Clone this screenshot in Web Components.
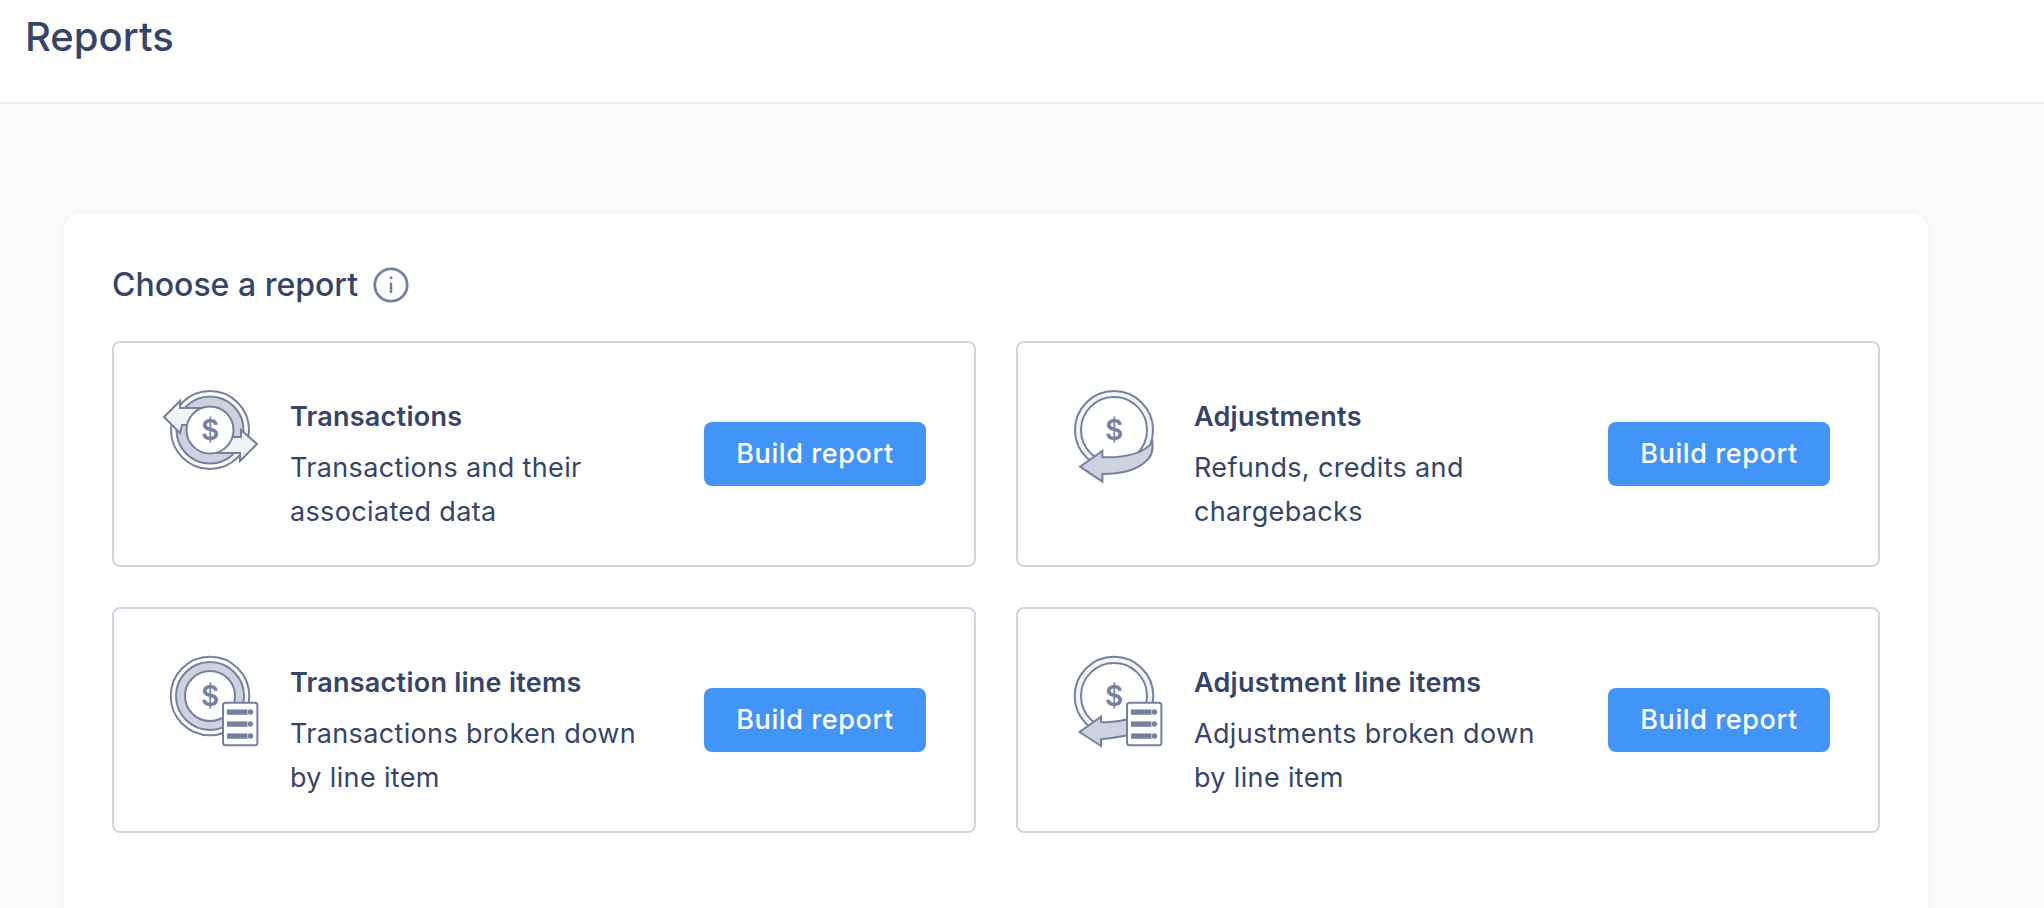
<!DOCTYPE html>
<html>
<head>
<meta charset="utf-8">
<title>Reports</title>
<style>
  html, body { margin: 0; height: 100%; overflow: hidden; }
  body { background: #fafafc; font-family: Inter, "Open Sans", sans-serif; color: #36446a; }
</style>
</head>
<body>
<app-header>Reports</app-header>
<report-panel heading="Choose a report">
  <report-card kind="transactions" name="Transactions">Transactions and their associated data</report-card>
  <report-card kind="adjustments" name="Adjustments">Refunds, credits and chargebacks</report-card>
  <report-card kind="transaction-items" name="Transaction line items">Transactions broken down by line item</report-card>
  <report-card kind="adjustment-items" name="Adjustment line items">Adjustments broken down by line item</report-card>
</report-panel>

<script>
  const dollar = `<text x="0" y="10" text-anchor="middle" font-family="Inter, sans-serif" font-size="28" font-weight="600" fill="#75819f" stroke="none">$</text>`;

  const listDoc = `
    <rect x="13" y="6.8" width="34.4" height="42.4" rx="2.5" fill="#fff"/>
    <g stroke="none" fill="#75819f">
      <rect x="18" y="14.4" width="18.4" height="3.4"/><circle cx="40.4" cy="16" r="1.7"/>
      <rect x="18" y="26.4" width="18.4" height="3.4"/><circle cx="40.4" cy="28" r="1.7"/>
      <rect x="18" y="38.4" width="18.4" height="3.4"/><circle cx="40.4" cy="40" r="1.7"/>
    </g>`;

  const icons = {
    transactions: `
      <circle r="39" fill="#fff"/>
      <circle r="33.5" fill="#ced2de"/>
      <path fill="#f3f4f8" d="M-46-13 -30-29V-22H-6V-5H-28L-30 3Z"/>
      <path fill="#f3f4f8" d="M47 14 31 0V7H6V23H30V31Z"/>
      <circle r="23.5" fill="#fff"/>
      ${dollar}`,
    adjustments: `
      <circle r="39" fill="#f3f4f8"/>
      <circle r="33" fill="#fff"/>
      ${dollar}
      <path fill="#ced2de" d="M-34 36.7-11.6 21V27.3Q27 28 38.4 12 40 26 31 32 18 44-11.6 44V51.7Z"/>`,
    'transaction-items': `
      <circle r="39.3" fill="#fff"/>
      <circle r="34" fill="#ced2de"/>
      <circle r="25" fill="#fff"/>
      ${dollar}
      ${listDoc}`,
    'adjustment-items': `
      <circle r="39.3" fill="#f3f4f8"/>
      <circle r="33" fill="#fff"/>
      ${dollar}
      <path fill="#ced2de" d="M-34.5 36-13 20.6V26Q0 27 14 23.3V39.3Q0 42-13 43.3V50Z"/>
      ${listDoc}`
  };

  class AppHeader extends HTMLElement {
    constructor() {
      super();
      this.attachShadow({ mode: 'open' });
      this.shadowRoot.innerHTML = `
        <style>
          :host {
            display: block;
            box-sizing: border-box;
            height: 104px;
            padding: 14px 25px 0;
            background: #fff;
            border-bottom: 2px solid #eceef3;
            font-size: 40px;
            line-height: 46px;
            font-weight: 500;
            color: #36446a;
          }
        </style>
        <slot></slot>
      `;
    }
  }

  class ReportPanel extends HTMLElement {
    constructor() {
      super();
      this.attachShadow({ mode: 'open' });
      this.shadowRoot.innerHTML = `
        <style>
          :host {
            display: block;
            box-sizing: border-box;
            margin: 109px 116px 0 64px;
            height: 695px;
            padding: 54px 48px 0;
            background: #fff;
            border-radius: 18px 18px 0 0;
            box-shadow: 0 2px 10px rgba(54, 68, 106, .06);
          }
          h2 {
            display: flex;
            align-items: center;
            gap: 15px;
            margin: 0 0 38px;
            font-size: 32px;
            line-height: 36px;
            font-weight: 500;
            color: #36446a;
          }
          svg { display: block; }
          .grid {
            display: grid;
            grid-template-columns: 1fr 1fr;
            gap: 40px;
          }
        </style>
        <h2><span class="title"></span>
          <svg width="36" height="36" viewBox="0 0 36 36" fill="none" stroke="#75819f" stroke-width="2.8">
            <circle cx="18" cy="18" r="16.2"/>
            <path d="M18 15.5V26" stroke-width="2.4"/>
            <circle cx="18" cy="10.8" r="1.5" fill="#75819f" stroke="none"/>
          </svg>
        </h2>
        <div class="grid"><slot></slot></div>
      `;
    }

    connectedCallback() {
      this.shadowRoot.querySelector('.title').textContent = this.getAttribute('heading');
    }
  }

  class ReportCard extends HTMLElement {
    constructor() {
      super();
      this.attachShadow({ mode: 'open' });
      this.shadowRoot.innerHTML = `
        <style>
          :host {
            display: grid;
            grid-template-columns: 100px 1fr auto;
            column-gap: 30px;
            align-items: center;
            box-sizing: border-box;
            height: 226px;
            padding: 0 48px 0 46px;
            background: #fff;
            border: 2px solid #d2d5e1;
            border-radius: 8px;
          }
          svg {
            display: block;
            align-self: start;
            margin-top: 37px;
            overflow: visible;
          }
          svg * { stroke: #75819f; stroke-width: 2; }
          svg text { stroke: none; }
          .text { align-self: start; margin-top: 54px; max-width: 360px; }
          .name {
            font-size: 27px;
            line-height: 40px;
            font-weight: 600;
            letter-spacing: .25px;
            margin-bottom: 9px;
          }
          .desc {
            font-size: 27px;
            line-height: 44px;
            font-weight: 400;
            letter-spacing: .35px;
          }
        </style>
        <svg width="100" height="100" viewBox="-50 -50 100 100"></svg>
        <div class="text">
          <div class="name"></div>
          <div class="desc"><slot></slot></div>
        </div>
        <build-button>Build report</build-button>
      `;
    }

    connectedCallback() {
      this.shadowRoot.querySelector('svg').innerHTML = icons[this.getAttribute('kind')];
      this.shadowRoot.querySelector('.name').textContent = this.getAttribute('name');
    }
  }

  class BuildButton extends HTMLElement {
    constructor() {
      super();
      this.attachShadow({ mode: 'open' });
      this.shadowRoot.innerHTML = `
        <style>
          :host { display: block; }
          button {
            display: block;
            width: 222px;
            height: 64px;
            padding: 0 0 2px;
            border: none;
            border-radius: 8px;
            background: #4394f9;
            color: #fff;
            font: 500 27px Inter, sans-serif;
            letter-spacing: .6px;
            cursor: pointer;
          }
        </style>
        <button><slot></slot></button>
      `;
    }
  }

  customElements.define('app-header', AppHeader);
  customElements.define('report-panel', ReportPanel);
  customElements.define('report-card', ReportCard);
  customElements.define('build-button', BuildButton);
</script>
</body>
</html>
